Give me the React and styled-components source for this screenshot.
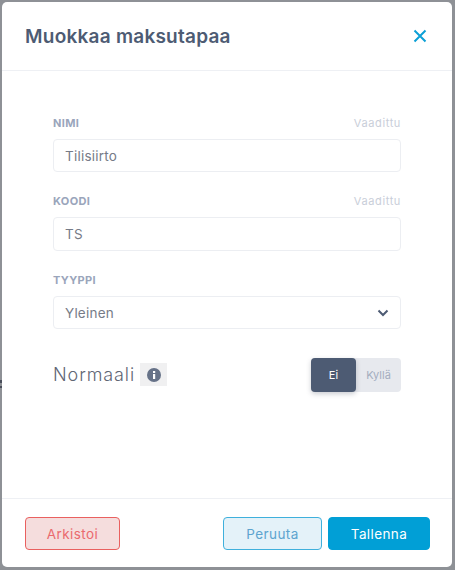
import React from "react";
import styled, { createGlobalStyle } from "styled-components";

const Global = createGlobalStyle`
  html, body { margin: 0; padding: 0; height: 570px; overflow: hidden; background: #8e9196; }
  * { box-sizing: border-box; }
`;
const Backdrop = styled.div`
  position: relative; width: 455px; height: 570px; padding: 2px 3px 3px 2px;
  font-family: Inter, "Open Sans", sans-serif;
`;
const BehindGlyph = styled.div`
  position: absolute; left: 0; top: 380px; width: 2px; height: 8px;
  background: linear-gradient(#4a4f5c 0 3px, transparent 3px 6px, #4a4f5c 6px 8px);
`;
const Modal = styled.div`
  width: 450px; height: 565px; background: #fff; border-radius: 5px;
  display: flex; flex-direction: column;
`;
const Header = styled.header`
  height: 69px; flex: none; display: flex; align-items: center; justify-content: space-between;
  padding: 1px 25px 1px 23px; border-bottom: 1px solid #eef0f4;
`;
const Title = styled.h2`
  margin: 0; font-size: 19px; font-weight: 600; color: #4d5b73; letter-spacing: 0.24px;
`;
const CloseButton = styled.button`
  border: 0; background: none; padding: 0; width: 14px; height: 14px; display: flex; color: #0ca0d6;
`;
const Body = styled.div`
  flex: 1; padding: 43.75px 51px 0; display: flex; flex-direction: column;
`;
const Field = styled.div`
  display: flex; flex-direction: column; margin-bottom: 21px;
`;
const LabelRow = styled.div`
  display: flex; justify-content: space-between; align-items: center; height: 16px; margin-bottom: 8px;
`;
const Label = styled.label`
  font-size: 11px; font-weight: 700; color: #9aa5bb; letter-spacing: 0.35px;
`;
const Required = styled.span`
  font-size: 11px; color: #c9ced9; letter-spacing: 0.62px;
`;
const Input = styled.div`
  height: 33.5px; border: 1px solid #eceef2; border-radius: 4px; padding: 0 11px;
  display: flex; align-items: center; justify-content: space-between;
  font-size: 13.5px; color: #767b87; letter-spacing: 0.22px;
`;
const ToggleRow = styled.div`
  display: flex; align-items: center; justify-content: space-between; margin-top: 7.25px;
`;
const ToggleLabel = styled.div`
  display: flex; align-items: center; gap: 5px; font-size: 18px; font-weight: 300; color: #5f6675; letter-spacing: 0.9px;
`;
const InfoBox = styled.span`
  width: 27px; height: 23px; background: #f0f0f1; display: flex; align-items: center; justify-content: center;
`;
const Segmented = styled.div`
  display: flex; width: 90px; height: 34px; background: #e7e9ee; border-radius: 4px;
`;
const Segment = styled.div`
  flex: 1; display: flex; align-items: center; justify-content: center; font-size: 11px; border-radius: 4px;
  color: ${p => (p.$active ? "#fff" : "#a4adbf")};
  background: ${p => (p.$active ? "#4d5b73" : "transparent")};
  box-shadow: ${p => (p.$active ? "0 2px 5px rgba(50,60,80,.25)" : "none")};
`;
const Footer = styled.footer`
  height: 69px; flex: none; border-top: 1px solid #eef0f4; display: flex; align-items: flex-start;
  padding: 18px 22px 0 23px; gap: 6px;
`;
const variants = {
  danger: "background:#f5dddd;border-color:#e9605f;color:#ea6a6e;",
  ghost: "background:#e4f2f9;border-color:#3fb0dc;color:#5da4cf;",
  primary: "background:#019fd6;border-color:#019fd6;color:#fff;",
};
const Button = styled.button`
  height: 33px; width: ${p => p.$w}px; border: 1px solid; border-radius: 4px; padding: 0;
  font-family: inherit; font-size: 13.5px; letter-spacing: 0.4px;
  ${p => variants[p.$kind]}
  ${p => p.$push && "margin-right: auto;"}
`;

const FormField = ({ label, required, value, select }) => (
  <Field>
    <LabelRow>
      <Label>{label}</Label>
      {required && <Required>Vaadittu</Required>}
    </LabelRow>
    <Input>
      {value}
      {select && (
        <svg width="12" height="8" viewBox="0 0 12 8" fill="none">
          <path d="M1.5 1.5 6 6l4.5-4.5" stroke="#4d5b73" strokeWidth="2" />
        </svg>
      )}
    </Input>
  </Field>
);

export default function App() {
  return (
    <Backdrop>
      <Global />
      <BehindGlyph />
      <Modal>
        <Header>
          <Title>Muokkaa maksutapaa</Title>
          <CloseButton aria-label="Sulje">
            <svg width="14" height="14" viewBox="0 0 14 14" fill="none">
              <path d="M1.5 1.5l11 11M12.5 1.5l-11 11" stroke="currentColor" strokeWidth="2" />
            </svg>
          </CloseButton>
        </Header>
        <Body>
          <FormField label="NIMI" required value="Tilisiirto" />
          <FormField label="KOODI" required value="TS" />
          <FormField label="TYYPPI" value="Yleinen" select />
          <ToggleRow>
            <ToggleLabel>
              Normaali
              <InfoBox>
                <svg width="14" height="14" viewBox="0 0 14 14">
                  <circle cx="7" cy="7" r="7" fill="#667288" />
                  <rect x="6" y="6" width="2.2" height="5" fill="#fff" />
                  <rect x="6" y="3" width="2.2" height="2" fill="#fff" />
                </svg>
              </InfoBox>
            </ToggleLabel>
            <Segmented>
              <Segment $active>Ei</Segment>
              <Segment>Kyllä</Segment>
            </Segmented>
          </ToggleRow>
        </Body>
        <Footer>
          <Button $kind="danger" $w={95} $push>Arkistoi</Button>
          <Button $kind="ghost" $w={99}>Peruuta</Button>
          <Button $kind="primary" $w={102}>Tallenna</Button>
        </Footer>
      </Modal>
    </Backdrop>
  );
}
